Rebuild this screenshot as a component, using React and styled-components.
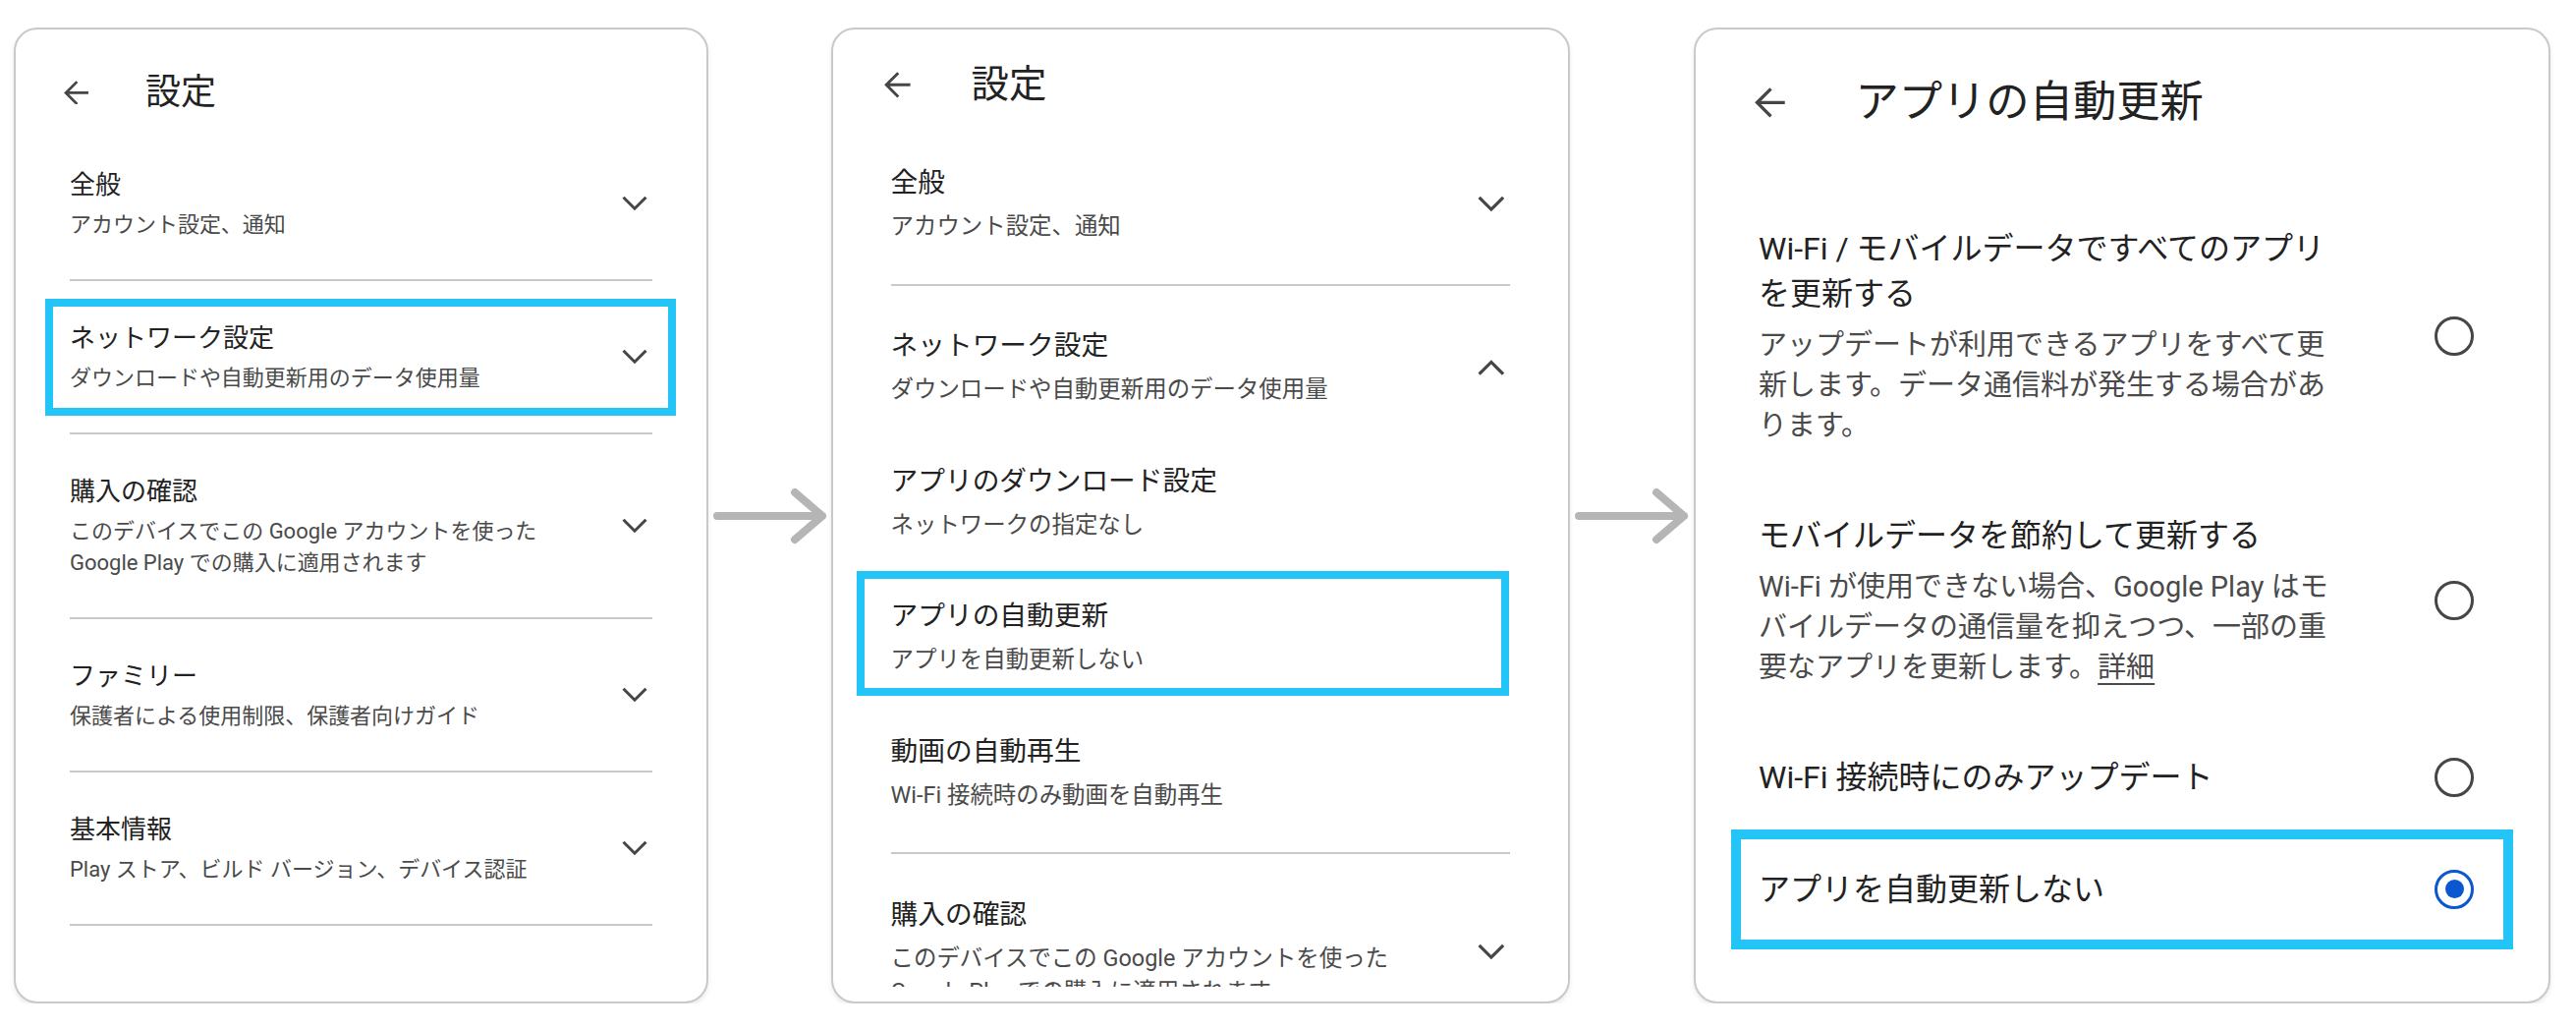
import React from "react";
import styled, { createGlobalStyle } from "styled-components";

const GlobalStyle = createGlobalStyle`
  * { box-sizing: border-box; }
  body {
    margin: 0;
    background: #fff;
    font-family: Roboto, "Noto Sans CJK JP", "Noto Sans", sans-serif;
    color: #222;
  }
`;

const Page = styled.div`
  display: flex;
  align-items: center;
  padding: 28px 0 0 14px;
`;

const Panel = styled.section`
  width: ${p => p.$w}px;
  height: 993px;
  flex-shrink: 0;
  display: flex;
  flex-direction: column;
  background: #fff;
  border: 2px solid #c9c9c9;
  border-radius: 24px;
  box-shadow: 0 3px 5px rgba(0, 0, 0, 0.08);
  font-size: ${p => p.$base}px;
  padding-bottom: 15px;
  overflow: hidden;
`;

const Header = styled.header`
  flex-shrink: 0;
  display: flex;
  align-items: center;
  gap: 2.23em;
  height: 2.77em;
  margin-top: ${p => p.$top}px;
  padding-left: 1.885em;
`;

const BackIcon = styled.svg`
  width: 0.96em;
  height: 0.96em;
  flex-shrink: 0;
  fill: none;
  stroke: #444746;
  stroke-width: 1.75;
`;

const HeaderTitle = styled.h1`
  margin: 0;
  font-size: 1.385em;
  font-weight: 400;
  line-height: 1;
  color: #222;
`;

const List = styled.div`
  flex: 1;
  min-height: 0;
  overflow: hidden;
  padding: 0 2.115em;
`;

const Section = styled.div`
  position: relative;
  padding: 0.5em 0 0.46em;
  border-bottom: 2px solid #c9c9c9;
`;

const Row = styled.div`
  position: relative;
  display: flex;
  align-items: center;
  justify-content: space-between;
  padding: 1.04em 0;
`;

const TextBlock = styled.div`
  white-space: nowrap;
`;

const Title = styled.div`
  font-size: 1em;
  line-height: 1.385;
  color: #222;
`;

const Sub = styled.div`
  font-size: 0.846em;
  line-height: 1.4545;
  margin-top: 0.318em;
  color: #4a4a4a;
`;

const ChevronIcon = styled.svg`
  width: 1em;
  height: 0.633em;
  margin-right: 0.2em;
  flex-shrink: 0;
  fill: none;
  stroke: #444746;
  stroke-width: 1.4;
`;

const Highlight = styled.div`
  position: absolute;
  top: ${p => p.$t}px;
  right: ${p => p.$r}px;
  bottom: ${p => p.$b}px;
  left: ${p => p.$l}px;
  border: ${p => p.$bw}px solid #22c5f6;
  pointer-events: none;
`;

const Connector = styled.div`
  width: ${p => p.$w}px;
  flex-shrink: 0;
  display: flex;
  justify-content: center;
  align-items: center;
`;

const ArrowSvg = styled.svg`
  width: 118px;
  height: 58px;
  stroke: #b5b5b5;
  stroke-width: 8;
  stroke-linecap: round;
  stroke-linejoin: round;
  fill: none;
`;

const OptionList = styled.div`
  padding: 47px 36px 0;
`;

const Option = styled.div`
  position: relative;
  display: flex;
  align-items: center;
  justify-content: space-between;
  padding: 34px 40px 34px 28px;
`;

const OptionTitle = styled.div`
  font-size: 32px;
  line-height: 46px;
  color: #222;
`;

const OptionSub = styled.div`
  font-size: 29px;
  line-height: 41px;
  margin-top: 9px;
  color: #4a4a4a;
`;

const More = styled.span`
  text-decoration: underline;
  text-underline-offset: 6px;
  text-decoration-thickness: 2px;
`;

const Radio = styled.span`
  width: 40px;
  height: 40px;
  flex-shrink: 0;
  border-radius: 50%;
  border: 3.5px solid ${p => (p.$on ? "#0b57d0" : "#444746")};
  display: grid;
  place-items: center;
  &::after {
    content: "";
    width: 19px;
    height: 19px;
    border-radius: 50%;
    background: #0b57d0;
    display: ${p => (p.$on ? "block" : "none")};
  }
`;

const Back = () => (
  <BackIcon viewBox="4 4 16 16">
    <path d="M20 12H5.6M12.6 4.7L5.3 12l7.3 7.3" />
  </BackIcon>
);

const Chevron = ({ up }) => (
  <ChevronIcon viewBox={up ? "6 7.9 12 7.6" : "6 8.5 12 7.6"}>
    <path d={up ? "M6.7 14.7L12 9.4l5.3 5.3" : "M6.7 9.3L12 14.6l5.3-5.3"} />
  </ChevronIcon>
);

const Arrow = ({ w }) => (
  <Connector $w={w}>
    <ArrowSvg viewBox="0 0 118 58">
      <path d="M5 29H112M84 5l28 24-28 24" />
    </ArrowSvg>
  </Connector>
);

const lines = arr =>
  arr.map((line, i) => (
    <React.Fragment key={i}>
      {i > 0 && <br />}
      {line}
    </React.Fragment>
  ));

const SettingRow = ({ title, sub, chevron, children }) => (
  <Row>
    <TextBlock>
      <Title>{title}</Title>
      <Sub>{lines(sub)}</Sub>
    </TextBlock>
    {chevron && <Chevron up={chevron === "up"} />}
    {children}
  </Row>
);

const purchase = {
  title: "購入の確認",
  sub: ["このデバイスでこの Google アカウントを使った", "Google Play での購入に適用されます"],
};

const SettingsPanel = () => (
  <Panel $w={707} $base={26}>
    <Header $top={28}>
      <Back />
      <HeaderTitle>設定</HeaderTitle>
    </Header>
    <List>
      <Section>
        <SettingRow title="全般" sub={["アカウント設定、通知"]} chevron="down" />
      </Section>
      <Section>
        <SettingRow title="ネットワーク設定" sub={["ダウンロードや自動更新用のデータ使用量"]} chevron="down" />
        <Highlight $t={18} $r={-24} $b={17} $l={-25} $bw={8} />
      </Section>
      <Section>
        <SettingRow {...purchase} chevron="down" />
      </Section>
      <Section>
        <SettingRow title="ファミリー" sub={["保護者による使用制限、保護者向けガイド"]} chevron="down" />
      </Section>
      <Section>
        <SettingRow title="基本情報" sub={["Play ストア、ビルド バージョン、デバイス認証"]} chevron="down" />
      </Section>
    </List>
  </Panel>
);

const NetworkPanel = () => (
  <Panel $w={752} $base={27.7}>
    <Header $top={18}>
      <Back />
      <HeaderTitle>設定</HeaderTitle>
    </Header>
    <List>
      <Section>
        <SettingRow title="全般" sub={["アカウント設定、通知"]} chevron="down" />
      </Section>
      <Section>
        <SettingRow title="ネットワーク設定" sub={["ダウンロードや自動更新用のデータ使用量"]} chevron="up" />
        <SettingRow title="アプリのダウンロード設定" sub={["ネットワークの指定なし"]} />
        <SettingRow title="アプリの自動更新" sub={["アプリを自動更新しない"]}>
          <Highlight $t={1} $r={1} $b={9} $l={-35} $bw={8.5} />
        </SettingRow>
        <SettingRow title="動画の自動再生" sub={["Wi-Fi 接続時のみ動画を自動再生"]} />
      </Section>
      <Section>
        <SettingRow {...purchase} chevron="down" />
      </Section>
    </List>
  </Panel>
);

const options = [
  {
    title: ["Wi-Fi / モバイルデータですべてのアプリ", "を更新する"],
    sub: ["アップデートが利用できるアプリをすべて更", "新します。データ通信料が発生する場合があ", "ります。"],
  },
  {
    title: ["モバイルデータを節約して更新する"],
    sub: ["Wi-Fi が使用できない場合、Google Play はモ", "バイルデータの通信量を抑えつつ、一部の重", "要なアプリを更新します。"],
    more: "詳細",
  },
  { title: ["Wi-Fi 接続時にのみアップデート"] },
  { title: ["アプリを自動更新しない"], selected: true },
];

const AutoUpdatePanel = () => (
  <Panel $w={872} $base={32}>
    <Header $top={30}>
      <Back />
      <HeaderTitle>アプリの自動更新</HeaderTitle>
    </Header>
    <OptionList>
      {options.map((o, i) => (
        <Option key={i}>
          <TextBlock>
            <OptionTitle>{lines(o.title)}</OptionTitle>
            {o.sub && (
              <OptionSub>
                {lines(o.sub)}
                {o.more && <More>{o.more}</More>}
              </OptionSub>
            )}
          </TextBlock>
          <Radio $on={o.selected} />
          {o.selected && <Highlight $t={-4} $r={0} $b={-4} $l={0} $bw={10} />}
        </Option>
      ))}
    </OptionList>
  </Panel>
);

export default function App() {
  return (
    <>
      <GlobalStyle />
      <Page>
        <SettingsPanel />
        <Arrow w={125} />
        <NetworkPanel />
        <Arrow w={126} />
        <AutoUpdatePanel />
      </Page>
    </>
  );
}
